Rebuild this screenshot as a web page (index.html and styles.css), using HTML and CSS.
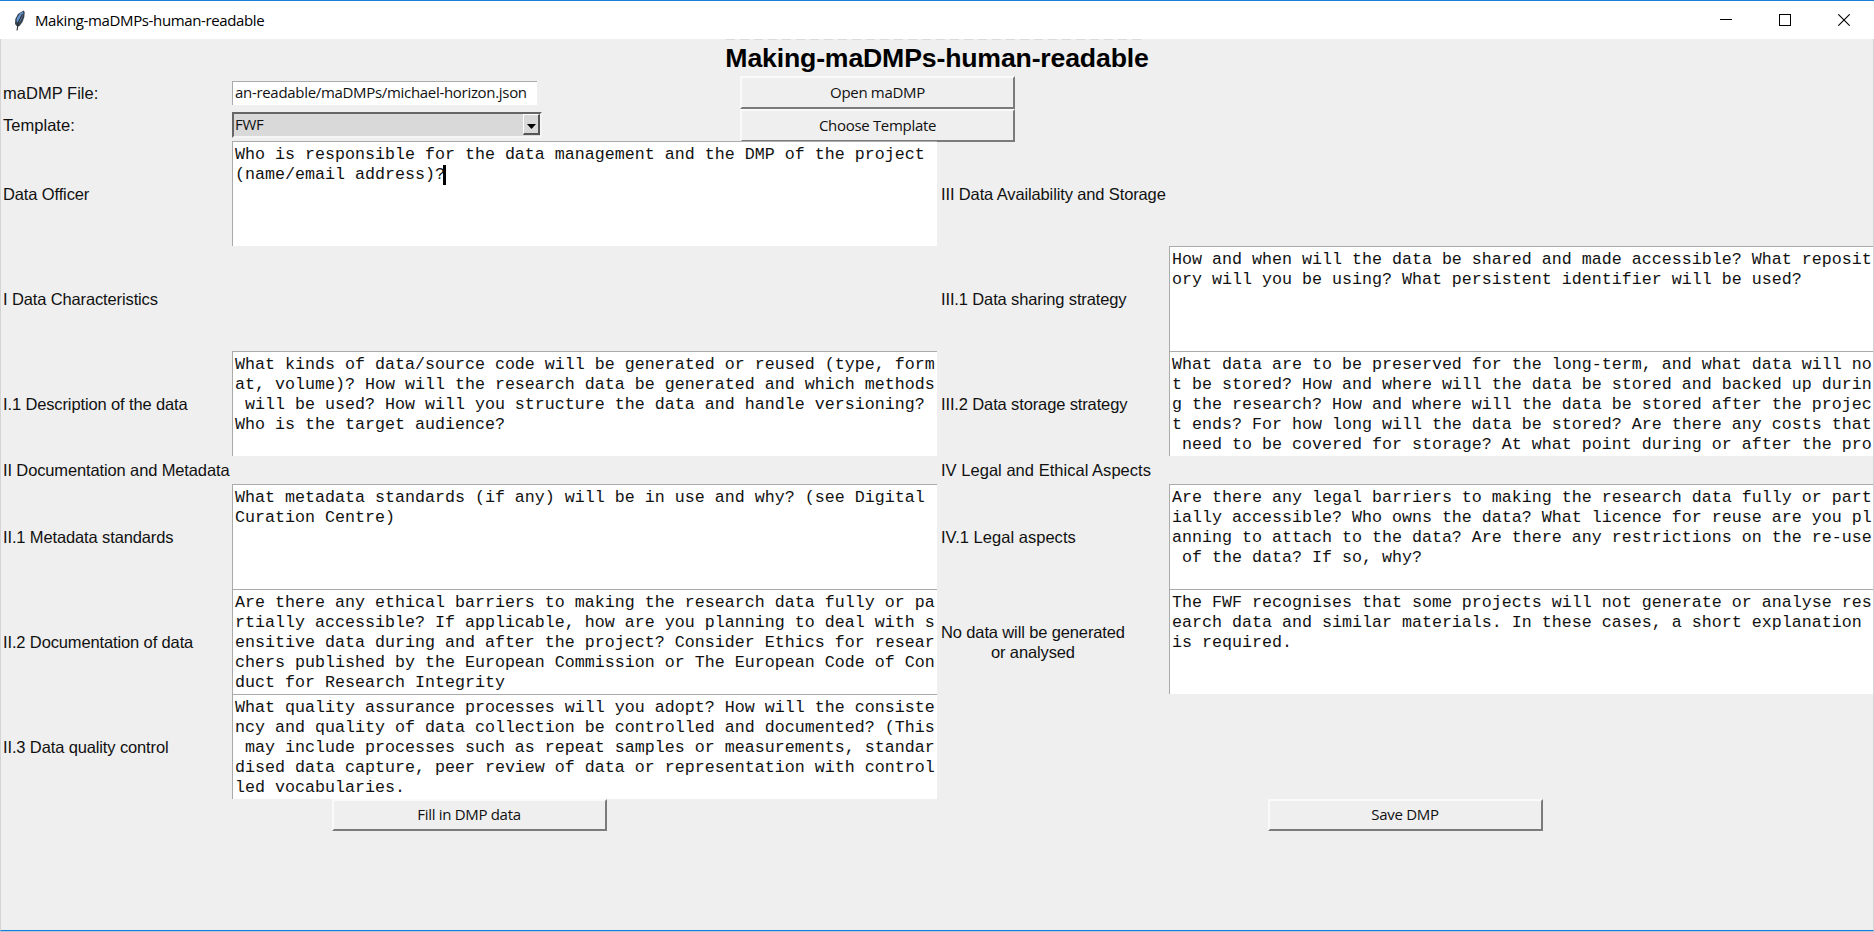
FILE: index.html
```html
<!DOCTYPE html>
<html lang="en">
<head>
<meta charset="utf-8">
<title>Making-maDMPs-human-readable</title>
<link rel="stylesheet" href="styles.css">
</head>
<body>
<div class="window">
  <header class="titlebar">
    <svg class="feather" width="16" height="24" viewBox="0 0 16 24">
      <path d="M11.500 2.500 L12.700 4 L12.300 9 L10.500 14 L7.500 18 L5 18.500 L3 16 L3.300 11 L6 6 Z" fill="#34414f"/>
      <path d="M11 3.500 L11.300 6 L9 12 L6.500 15.500 L4.500 13 L5 10 L8 5.500 Z" fill="#6596d2"/>
      <path d="M10.500 6 L6.500 14 L5 22.500" fill="none" stroke="#2b2b2b" stroke-width="1.100"/>
    </svg>
    <span class="caption">Making-maDMPs-human-readable</span>
    <div class="controls">
      <svg width="12" height="12" viewBox="0 0 12 12"><path d="M0 5.500H12" stroke="#000"/></svg>
      <svg width="12" height="12" viewBox="0 0 12 12"><rect x=".5" y=".5" width="11" height="11" fill="none" stroke="#000"/></svg>
      <svg width="12" height="12" viewBox="0 0 12 12"><path d="M.3 .3L11.700 11.700M11.700 .3L.3 11.700" stroke="#000" stroke-width="1.100"/></svg>
    </div>
  </header>
  <main class="form">
    <h1 class="heading"><span>Making-maDMPs-human-readable</span></h1>
    <div class="label wide">maDMP File:</div>
    <div class="file-cell"><div class="entry"><span>an-readable/maDMPs/michael-horizon.json</span></div></div>
    <div class="open-cell"><button class="button"><span>Open maDMP</span></button></div>
    <div class="label wide">Template:</div>
    <div class="file-cell"><div class="combo"><span>FWF</span><i class="arrow"><svg width="9" height="5" viewBox="0 0 9 5"><path d="M0 0H9L4.500 5Z" fill="#000"/></svg></i></div></div>
    <div class="open-cell"><button class="button"><span>Choose Template</span></button></div>

    <div class="label">Data Officer</div>
    <div class="text">Who is responsible for the data management and the DMP of the project 
(name/email address)?<i class="caret"></i></div>
    <div class="label right">III Data Availability and Storage</div>
    <div></div>

    <div class="label">I Data Characteristics</div>
    <div></div>
    <div class="label right">III.1 Data sharing strategy</div>
    <div class="text">How and when will the data be shared and made accessible? What reposit
ory will you be using? What persistent identifier will be used?</div>

    <div class="label">I.1 Description of the data</div>
    <div class="text">What kinds of data/source code will be generated or reused (type, form
at, volume)? How will the research data be generated and which methods
 will be used? How will you structure the data and handle versioning?
Who is the target audience?</div>
    <div class="label right">III.2 Data storage strategy</div>
    <div class="text">What data are to be preserved for the long-term, and what data will no
t be stored? How and where will the data be stored and backed up durin
g the research? How and where will the data be stored after the projec
t ends? For how long will the data be stored? Are there any costs that
 need to be covered for storage? At what point during or after the pro</div>

    <div class="label">II Documentation and Metadata</div>
    <div></div>
    <div class="label right wide">IV Legal and Ethical Aspects</div>
    <div></div>

    <div class="label">II.1 Metadata standards</div>
    <div class="text">What metadata standards (if any) will be in use and why? (see Digital
Curation Centre)</div>
    <div class="label right wide">IV.1 Legal aspects</div>
    <div class="text">Are there any legal barriers to making the research data fully or part
ially accessible? Who owns the data? What licence for reuse are you pl
anning to attach to the data? Are there any restrictions on the re-use
 of the data? If so, why?</div>

    <div class="label">II.2 Documentation of data</div>
    <div class="text">Are there any ethical barriers to making the research data fully or pa
rtially accessible? If applicable, how are you planning to deal with s
ensitive data during and after the project? Consider Ethics for resear
chers published by the European Commission or The European Code of Con
duct for Research Integrity</div>
    <div class="label right two-line">No data will be generated<br>or analysed</div>
    <div class="text">The FWF recognises that some projects will not generate or analyse res
earch data and similar materials. In these cases, a short explanation
is required.</div>

    <div class="label">II.3 Data quality control</div>
    <div class="text">What quality assurance processes will you adopt? How will the consiste
ncy and quality of data collection be controlled and documented? (This
 may include processes such as repeat samples or measurements, standar
dised data capture, peer review of data or representation with control
led vocabularies.</div>
    <div></div>
    <div></div>

    <div class="action"><button class="button"><span>Fill in DMP data</span></button></div>
    <div class="action"><button class="button"><span>Save DMP</span></button></div>
  </main>
</div>
</body>
</html>
```
FILE: styles.css
```css
* { box-sizing: border-box; }
body { margin: 0; background: #efefef; overflow: hidden; color: #111; }
.window {
  width: 1874px; height: 932px; display: flex; flex-direction: column;
  border-top: 1px solid #1a7fd4; border-bottom: 1px solid #b9c4cc; background: #efefef;
}
.titlebar {
  height: 38px; flex: none; background: #fff; display: flex; align-items: center;
  padding: 0 24px 0 12px; font: 15px/20px "Open Sans", sans-serif; color: #000;
}
.feather { flex: none; }
.caption { margin-left: 7px; padding-bottom: 1px; letter-spacing: -0.37px; white-space: nowrap; }
.controls { margin-left: auto; display: flex; gap: 47px; }
.controls svg { display: block; }
.form {
  flex: 1; display: grid; align-content: start;
  grid-template-columns: 231px 705px 232px 704px;
  grid-template-rows: 37px 33px 32px 105px 105px 105px 28px 105px 105px 105px 33px;
  border: solid #d4d4d4; border-width: 0 1px; border-bottom: 1px solid #0f80dd;
}
.heading {
  grid-column: 1 / -1; margin: 0; text-align: center; letter-spacing: -0.17px;
  font: bold 26.67px/38px "Liberation Sans", Arial, sans-serif; color: #000;
  background: repeating-linear-gradient(90deg, #dadada 0 9px, #efefef 9px 14px) 725px 0 / 420px 1px no-repeat;
}
.label {
  display: flex; align-items: center; padding-left: 2px; letter-spacing: -0.13px;
  font: 16.5px/20px "Liberation Sans", Arial, sans-serif; white-space: nowrap;
}
.right { padding-left: 4px; }
.wide { letter-spacing: 0.03px; }
.two-line { display: block; justify-self: start; align-self: center; text-align: center; }
.file-cell { display: flex; align-items: center; }
.open-cell { grid-column: 3 / 5; margin-left: -197px; display: flex; }
.entry, .combo, .button { font: 15px/20px "Open Sans", sans-serif; letter-spacing: -0.31px; white-space: nowrap; }
.entry {
  width: 305px; height: 24px; background: #fff; padding-left: 2px;
  border-top: 1px solid #aaa; border-left: 1px solid #aaa;
}
.combo {
  width: 310px; height: 26px; background: #d9d9d9; padding-left: 1px;
  display: flex; justify-content: space-between;
  border: 2px solid #666; border-right-color: #f5f5f5; border-bottom-color: #f5f5f5;
}
.arrow {
  width: 17px; height: 21px; display: flex; align-items: center; justify-content: center;
  padding-top: 4px;
  border: 1px solid #fff; border-right: 2px solid #555; border-bottom: 2px solid #555;
}
.button {
  width: 275px; height: 33px; padding: 0 0 2px; background: #efefef; color: #111;
  border: 2px solid #fafafa; border-right-color: #7b7b7b; border-bottom-color: #7b7b7b;
}
.text {
  background: #fff; border-top: 1px solid #aaa; border-left: 1px solid #aaa;
  padding: 3px 0 0 2px; overflow: hidden; white-space: pre;
  font: 16.667px/20px "Liberation Mono", "Courier New", monospace;
}
.caret { display: inline-block; width: 3px; height: 20px; margin-left: -2px; background: #000; vertical-align: top; }
.action { grid-column: span 2; display: flex; justify-content: center; }
.action .button { height: 32px; }
```
